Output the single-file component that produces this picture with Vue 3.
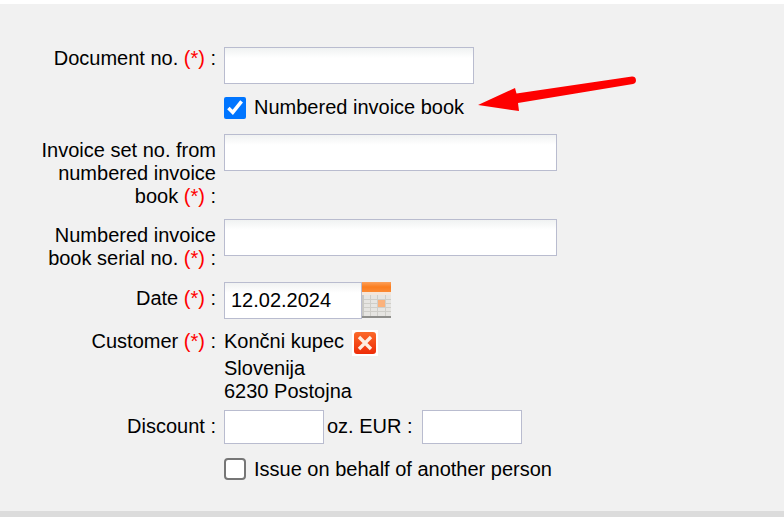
<template>
  <div class="page">
    <form class="form" @submit.prevent>
      <div class="row row-doc">
        <div class="label">Document no. <span class="req">(*)</span> :</div>
        <input class="text doc-input" type="text" />
      </div>

      <label class="row check check-numbered">
        <input type="checkbox" class="box" checked />
        <span>Numbered invoice book</span>
      </label>

      <div class="row row-set">
        <div class="label">
          <div>Invoice set no. from</div>
          <div>numbered invoice</div>
          <div>book <span class="req">(*)</span> :</div>
        </div>
        <input class="text wide" type="text" />
      </div>

      <div class="row row-serial">
        <div class="label">
          <div>Numbered invoice</div>
          <div>book serial no. <span class="req">(*)</span> :</div>
        </div>
        <input class="text wide" type="text" />
      </div>

      <div class="row row-date">
        <div class="label">Date <span class="req">(*)</span> :</div>
        <input class="text date-input" type="text" value="12.02.2024" />
        <svg class="calendar" width="29" height="36" viewBox="0 0 29 36">
          <defs>
            <linearGradient id="calTop" x1="0" y1="0" x2="0" y2="1">
              <stop offset="0" stop-color="#fca05a" />
              <stop offset="0.5" stop-color="#fb7d1e" />
              <stop offset="1" stop-color="#fb8a35" />
            </linearGradient>
          </defs>
          <rect x="0" y="0" width="29" height="10" fill="url(#calTop)" />
          <rect x="0" y="10" width="29" height="3" fill="#f4e6da" />
          <rect x="0" y="13" width="29" height="21" fill="#e6e5e2" />
          <rect x="0" y="13" width="2" height="21" fill="#c9c8c4" />
          <path d="M2 17.500h27M2 21.500h27M2 25.500h27M2 29.500h27M8.500 13v21M15.500 13v21M23.500 13v21" stroke="#cfcec9" stroke-width="1" fill="none" />
          <rect x="16" y="18" width="7" height="7" fill="#fbb27c" />
          <rect x="0" y="34" width="29" height="2" fill="#8f8f8c" />
        </svg>
      </div>

      <div class="row row-customer">
        <div class="label">Customer <span class="req">(*)</span> :</div>
        <div class="customer">
          <div class="customer-name">
            Končni kupec
            <svg class="remove" width="26" height="26" viewBox="0 0 26 26">
              <defs>
                <linearGradient id="redFill" x1="0" y1="0" x2="0" y2="1">
                  <stop offset="0" stop-color="#fb6a2a" />
                  <stop offset="1" stop-color="#ee2c08" />
                </linearGradient>
              </defs>
              <rect x="0" y="0" width="26" height="26" fill="#fff" />
              <rect x="2" y="2" width="22" height="22" rx="3" fill="url(#redFill)" />
              <path d="M7 7l12 12M19 7L7 19" stroke="#fdeee2" stroke-width="3.400" />
            </svg>
          </div>
          <div>Slovenija</div>
          <div>6230 Postojna</div>
        </div>
      </div>

      <div class="row row-discount">
        <div class="label">Discount :</div>
        <input class="text small" type="text" />
        <span class="eur">oz. EUR :</span>
        <input class="text small" type="text" />
      </div>

      <label class="row check check-behalf">
        <input type="checkbox" class="box box-plain" />
        <span>Issue on behalf of another person</span>
      </label>
    </form>
    <div class="foot"></div>

    <svg class="arrow" width="784" height="517" viewBox="0 0 784 517">
      <path d="M478 105 L515 88 L516.500 93.500 L632 76.500 A3.800 3.800 0 0 1 633 84 L518 103 L519 111 Z" fill="#fe0000" />
    </svg>
  </div>
</template>

<script setup>
</script>

<style>
html, body {
  margin: 0;
  background: #fff;
}
</style>

<style scoped>
.page {
  position: relative;
  width: 784px;
  height: 517px;
  overflow: hidden;
  padding-top: 4px;
  box-sizing: border-box;
  font-family: "Liberation Sans", Arial, sans-serif;
  font-size: 20px;
  line-height: 23px;
  color: #000;
}
.form {
  height: 507px;
  padding-top: 43px;
  box-sizing: border-box;
  background: #f1f1f1;
}
.foot {
  height: 6px;
  background: #dcdcdc;
}
.row {
  display: flex;
  align-items: flex-start;
}
.label {
  flex: none;
  width: 216px;
  margin-right: 8px;
  padding-top: 5px;
  text-align: right;
}
.req {
  color: #f00;
}
.text {
  box-sizing: border-box;
  height: 37px;
  padding: 0 6px;
  border: 1px solid #b9bccf;
  background: linear-gradient(#f0f2f2, #fff 10px);
  font: inherit;
  color: #000;
  outline: none;
}
.row-doc .label {
  padding-top: 0;
}
.doc-input {
  width: 250px;
}
.wide {
  width: 333px;
}
.date-input {
  width: 138px;
}
.calendar {
  display: block;
}
.small {
  width: 100px;
  height: 34px;
  background: #fff;
}
.eur {
  flex: none;
  margin: 5px 9px 0 3px;
  white-space: nowrap;
}
.row-set {
  margin-top: 15px;
}
.row-serial {
  margin-top: 11px;
}
.row-date {
  margin-top: 12px;
}
.row-customer {
  margin-top: 11px;
}
.row-customer .label {
  padding-top: 0;
}
.row-discount {
  margin-top: 7px;
}
.customer-name {
  display: flex;
  align-items: flex-start;
  gap: 8px;
  height: 26.5px;
}
.remove {
  display: block;
}
.check {
  align-items: center;
  gap: 8px;
  padding-left: 224px;
}
.box {
  flex: none;
  width: 22px;
  height: 22px;
  margin: 0;
  accent-color: #0075ff;
}
.box-plain {
  appearance: none;
  box-sizing: border-box;
  border: 2px solid #767676;
  border-radius: 4px;
  background: #fff;
}
.check-numbered {
  margin-top: 12px;
}
.check-behalf {
  margin-top: 14px;
}
.arrow {
  position: absolute;
  left: 0;
  top: 0;
  pointer-events: none;
}
</style>
